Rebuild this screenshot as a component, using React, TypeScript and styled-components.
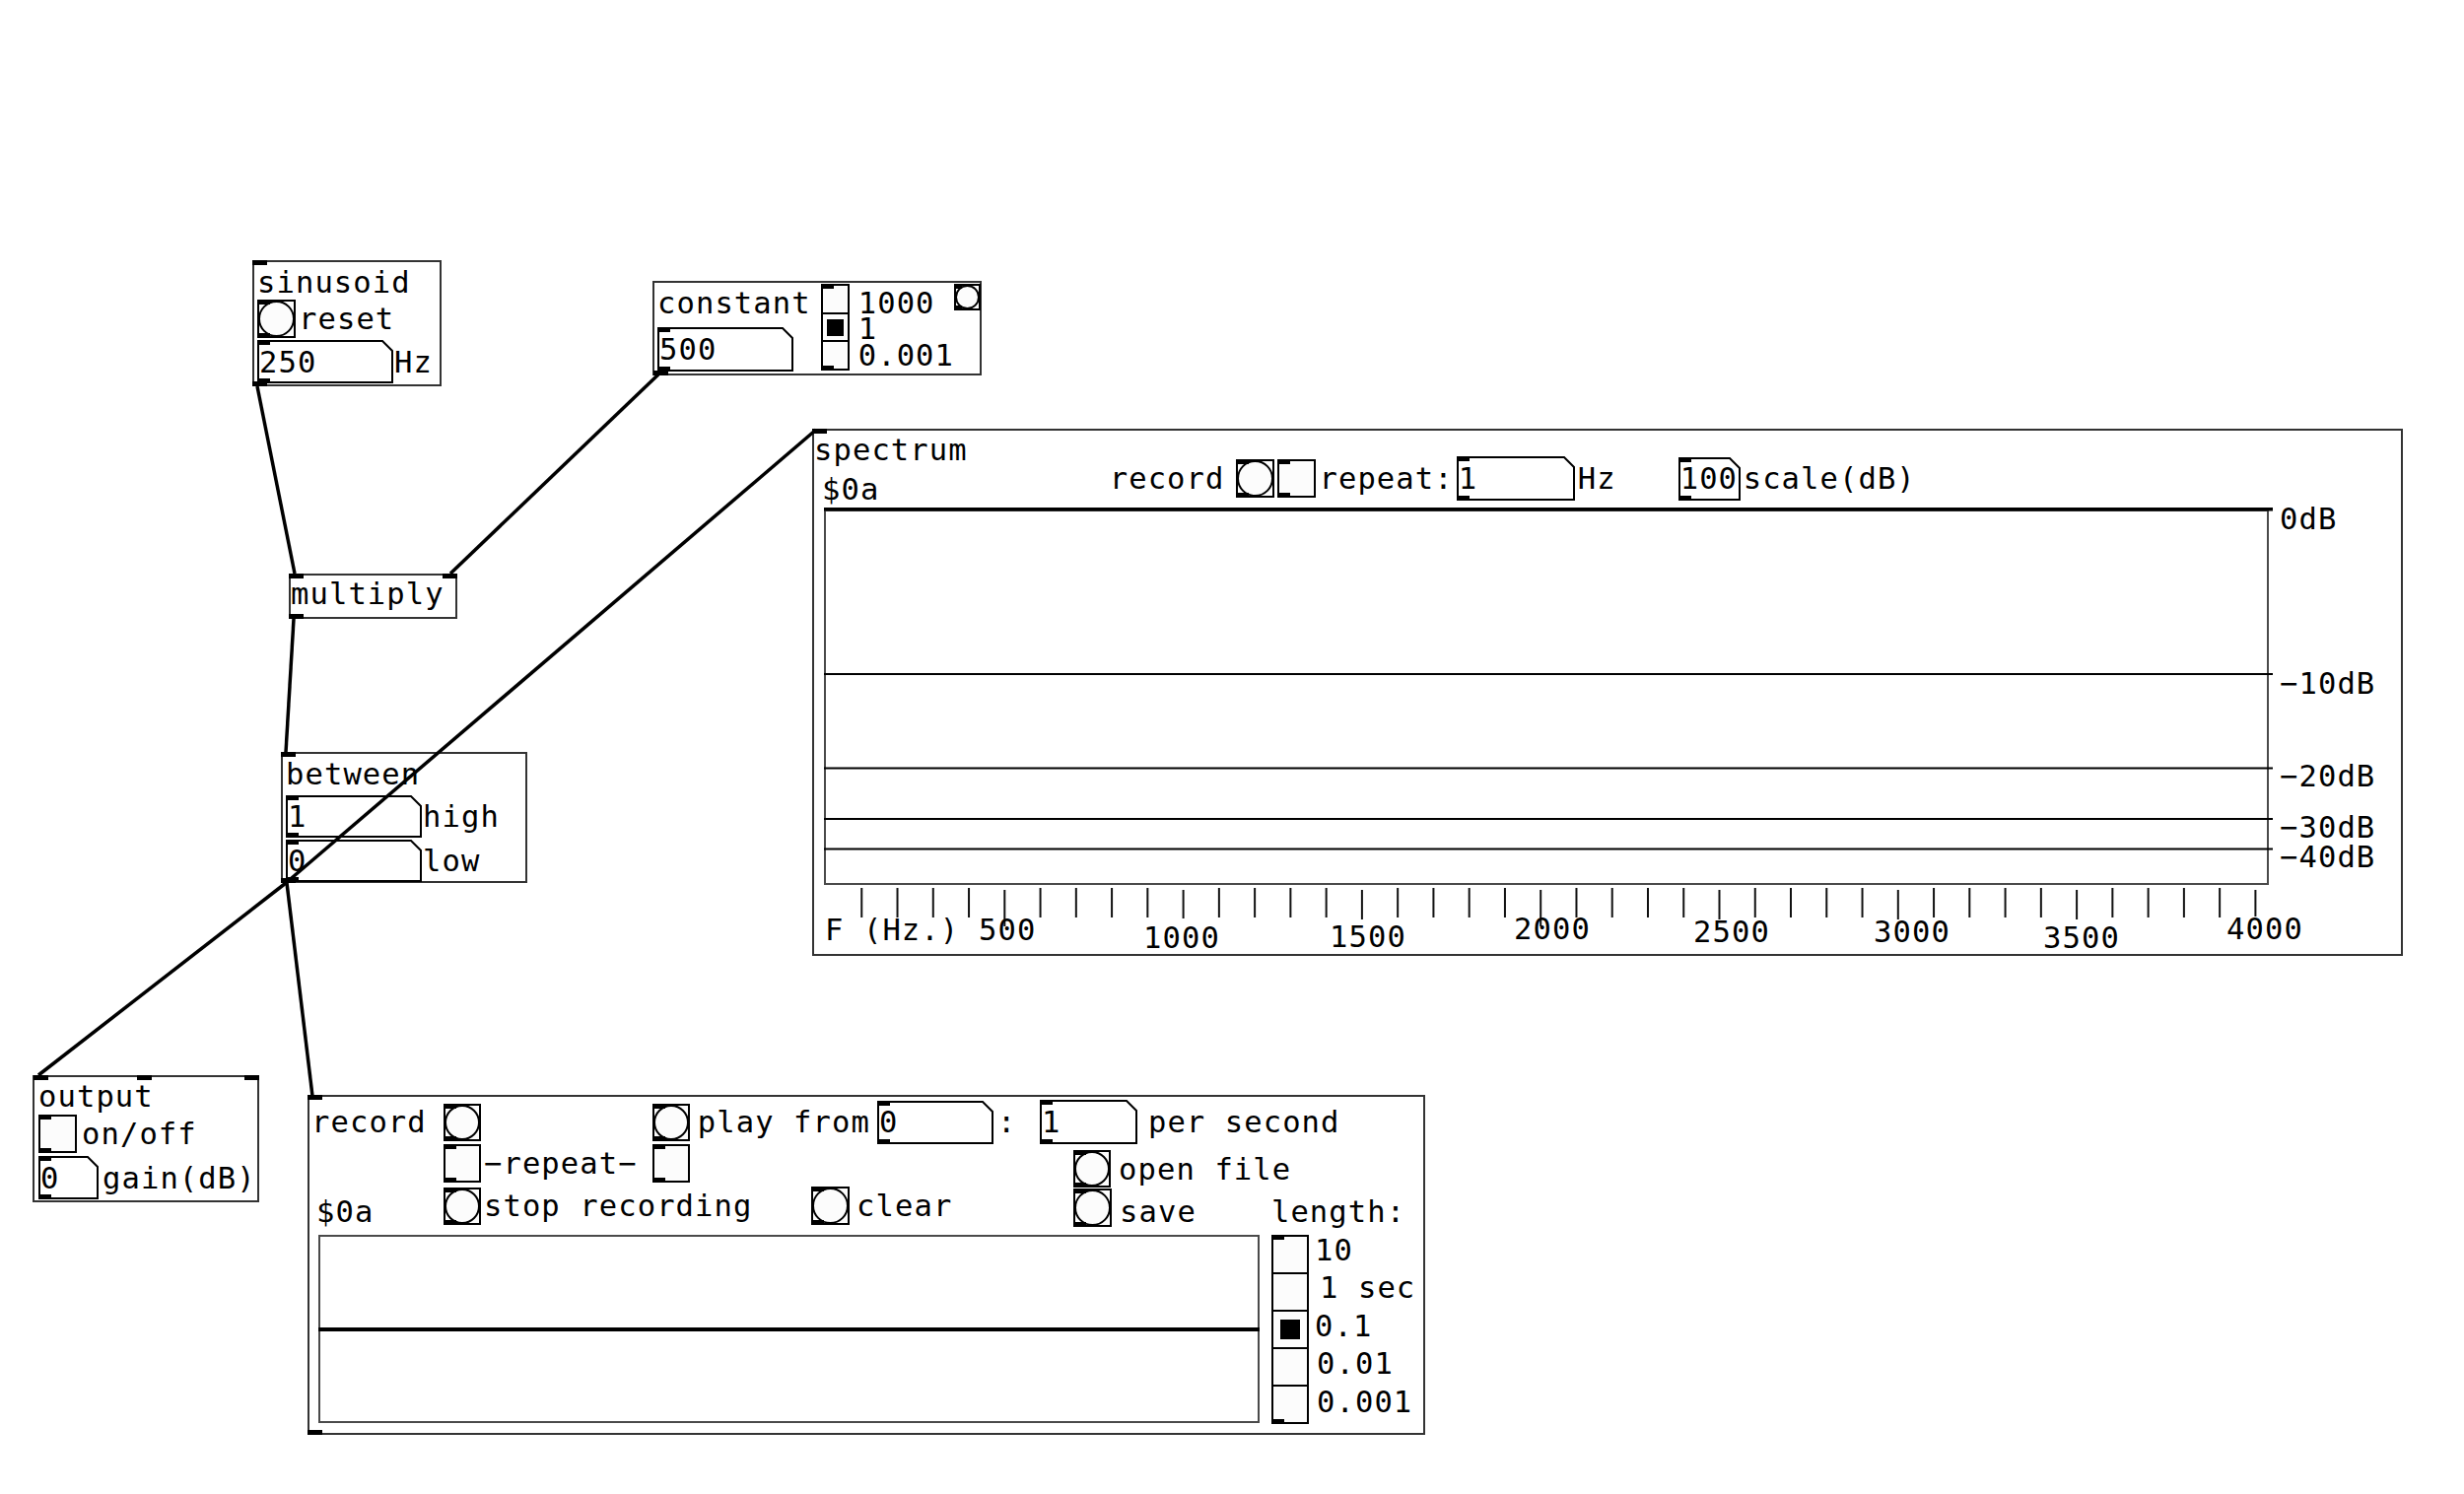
import React from "react";
import styled, { createGlobalStyle } from "styled-components";

const GlobalStyle = createGlobalStyle`
  html, body { margin: 0; padding: 0; background: #ffffff; }
  #root { width: 2500px; height: 1516px; }
`;

const FONT = `"DejaVu Sans Mono", "Liberation Mono", monospace`;

/* ---------- canvas & diagram nodes ---------- */

const Canvas = styled.div`
  position: relative;
  width: 2500px;
  height: 1516px;
  overflow: hidden;
  background: #ffffff;
  color: #000000;
  font-family: ${FONT};
  font-size: 30.5px;
  line-height: 31px;
  letter-spacing: 1.1px;
`;

type Rect = { $x: number; $y: number; $w: number; $h: number };

/* a Pd box: its place on the patch canvas is the content itself */
const Node = styled.div<Rect>`
  position: absolute;
  left: ${(p) => p.$x}px;
  top: ${(p) => p.$y}px;
  width: ${(p) => p.$w}px;
  height: ${(p) => p.$h}px;
  box-sizing: border-box;
  border: 2px solid #333333;
  background: #ffffff;
`;

/* inlet / outlet marks sit over the box border */
const Port = styled.span<{ $x: number; $out?: boolean }>`
  position: absolute;
  left: ${(p) => p.$x - 2}px;
  ${(p) => (p.$out ? "bottom" : "top")}: -2px;
  width: 15px;
  height: 5px;
  background: #000000;
`;

const Label = styled.span<{ $ml?: number }>`
  display: block;
  flex: none;
  margin-left: ${(p) => p.$ml ?? 0}px;
  white-space: pre;
`;

const WidgetRow = styled.div<{ $gap: number }>`
  display: flex;
  align-items: center;
  gap: ${(p) => p.$gap}px;
`;

/* ---------- iemgui widgets ---------- */

const IemShell = styled.div<{ $w: number; $h: number; $ml?: number }>`
  position: relative;
  flex: none;
  width: ${(p) => p.$w}px;
  height: ${(p) => p.$h}px;
  margin-left: ${(p) => p.$ml ?? 0}px;
  box-sizing: border-box;
  border: 2px solid #000000;
  background: #fcfcfc;
`;

const IemMark = styled.span<{ $out?: boolean; $small?: boolean }>`
  position: absolute;
  left: -2px;
  ${(p) => (p.$out ? "bottom" : "top")}: -2px;
  width: ${(p) => (p.$small ? 8 : 13)}px;
  height: 5px;
  background: #000000;
`;

const BangRing = styled.span`
  position: absolute;
  inset: -1px;
  box-sizing: border-box;
  border: 2px solid #000000;
  border-radius: 50%;
`;

const NumWrap = styled.div<{ $w: number; $h: number; $ml?: number }>`
  position: relative;
  flex: none;
  display: flex;
  align-items: center;
  width: ${(p) => p.$w}px;
  height: ${(p) => p.$h}px;
  margin-left: ${(p) => p.$ml ?? 0}px;
  padding-left: 2px;
  box-sizing: border-box;
`;

const NumFrame = styled.svg`
  position: absolute;
  inset: 0;
  overflow: visible;
`;

const NumMark = styled.span<{ $out?: boolean }>`
  position: absolute;
  left: 0;
  ${(p) => (p.$out ? "bottom" : "top")}: 0;
  width: 13px;
  height: 5px;
  background: #000000;
`;

const NumValue = styled.span`
  position: relative;
  white-space: pre;
`;

const RadioColumn = styled.div<{ $w: number; $h: number; $ml?: number }>`
  position: relative;
  flex: none;
  display: flex;
  flex-direction: column;
  width: ${(p) => p.$w}px;
  height: ${(p) => p.$h}px;
  margin-left: ${(p) => p.$ml ?? 0}px;
  box-sizing: border-box;
  border: 2px solid #000000;
  background: #fcfcfc;
`;

const RadioCell = styled.div`
  flex: 1 1 0;
  display: flex;
  align-items: center;
  justify-content: center;
  & + & {
    border-top: 2px solid #000000;
  }
`;

const RadioDot = styled.span<{ $d: number }>`
  width: ${(p) => p.$d}px;
  height: ${(p) => p.$d}px;
  background: #000000;
`;

const ScaleStack = styled.div<{ $lh: number; $gap?: number; $pt?: number; $mt?: number; $ml?: number }>`
  display: flex;
  flex-direction: column;
  flex: none;
  gap: ${(p) => p.$gap ?? 0}px;
  line-height: ${(p) => p.$lh}px;
  padding-top: ${(p) => p.$pt ?? 0}px;
  margin-top: ${(p) => p.$mt ?? 0}px;
  margin-left: ${(p) => p.$ml ?? 0}px;
`;

/* ---------- node layouts ---------- */

const SinusoidBox = styled(Node)`
  display: flex;
  flex-direction: column;
  gap: 2px;
  padding: 5px 0 0 3px;
`;

const ConstantBox = styled(Node)`
  display: flex;
  align-items: flex-start;
  padding: 1px 0 0 3px;
`;

const ConstantMain = styled.div`
  display: flex;
  flex-direction: column;
  gap: 9px;
  padding-top: 4px;
`;

const CornerBang = styled.div`
  margin-left: auto;
`;

const MultiplyBox = styled(Node)`
  padding-top: 3px;
`;

const BetweenBox = styled(Node)`
  display: grid;
  grid-template-rows: 40px 43px 43px;
  row-gap: 2px;
  align-items: center;
  padding-left: 3px;
`;

const OutputBox = styled(Node)`
  display: flex;
  flex-direction: column;
  gap: 3px;
  padding: 4px 0 0 4px;
`;

const SpectrumBox = styled(Node)`
  display: flex;
  flex-direction: column;
  padding-top: 2px;
`;

const SpectrumHeader = styled.div`
  display: flex;
  align-items: flex-start;
`;

const TitleStack = styled.div`
  display: flex;
  flex-direction: column;
  gap: 9px;
  padding-top: 2px;
`;

const HeaderControls = styled(WidgetRow)`
  margin: 24px 0 0 144px;
`;

const SpectrumChart = styled.svg`
  display: block;
  flex: none;
  margin: 1px 0 0 8px;
  overflow: visible;
  font-family: ${FONT};
  font-size: 30.5px;
  letter-spacing: 1.1px;
`;

const RecordBox = styled(Node)`
  display: flex;
  flex-direction: column;
  padding: 3px 0 0 2px;
`;

const RecordControls = styled.div`
  display: flex;
  align-items: flex-start;
`;

const BottomLabel = styled(Label)`
  align-self: flex-end;
`;

const ControlStack = styled.div<{ $gap: number; $ml: number; $mt?: number }>`
  display: flex;
  flex-direction: column;
  gap: ${(p) => p.$gap}px;
  margin-left: ${(p) => p.$ml}px;
  margin-top: ${(p) => p.$mt ?? 0}px;
`;

const SaveRow = styled(WidgetRow)`
  align-items: flex-end;
`;

const StorageRow = styled.div`
  display: flex;
  align-items: flex-start;
  margin-top: 8px;
`;

const ArrayView = styled.svg`
  display: block;
  flex: none;
  margin-left: 7px;
`;

const CordLayer = styled.svg`
  position: absolute;
  left: 0;
  top: 0;
  z-index: 5;
  pointer-events: none;
`;

/* ---------- widget components ---------- */

function Bang({ s, small, ml }: { s: number; small?: boolean; ml?: number }) {
  return (
    <IemShell $w={s} $h={s} $ml={ml}>
      <BangRing />
      <IemMark $small={small} />
      <IemMark $out $small={small} />
    </IemShell>
  );
}

function Toggle({ w, h, ml }: { w: number; h: number; ml?: number }) {
  return (
    <IemShell $w={w} $h={h} $ml={ml}>
      <IemMark />
      <IemMark $out />
    </IemShell>
  );
}

function NumBox({ w, h, value, ml }: { w: number; h: number; value: string; ml?: number }) {
  const pts = `1,1 ${w - 11},1 ${w - 1},11 ${w - 1},${h - 1} 1,${h - 1}`;
  return (
    <NumWrap $w={w} $h={h} $ml={ml}>
      <NumFrame width={w} height={h} viewBox={`0 0 ${w} ${h}`}>
        <polygon points={pts} fill="#ffffff" stroke="#000000" strokeWidth={2} />
      </NumFrame>
      <NumMark />
      <NumMark $out />
      <NumValue>{value}</NumValue>
    </NumWrap>
  );
}

function VRadio({ w, h, n, sel, dot, ml }: { w: number; h: number; n: number; sel: number; dot: number; ml?: number }) {
  return (
    <RadioColumn $w={w} $h={h} $ml={ml}>
      {Array.from({ length: n }, (_, i) => (
        <RadioCell key={i}>{i === sel ? <RadioDot $d={dot} /> : null}</RadioCell>
      ))}
      <IemMark />
      <IemMark $out />
    </RadioColumn>
  );
}

/* ---------- chart data (spectrum node coordinates) ---------- */

const dbLevels = [
  { y: 81.7, w: 3.5, label: "0dB", b: 102 },
  { y: 249, w: 2, label: "\u221210dB", b: 269 },
  { y: 344.5, w: 2, label: "\u221220dB", b: 363 },
  { y: 396, w: 2, label: "\u221230dB", b: 415 },
  { y: 426.5, w: 2, label: "\u221240dB", b: 445 },
];

const freqLabels = [
  { t: "F (Hz.)", x: 13, b: 519 },
  { t: "500", x: 169, b: 519 },
  { t: "1000", x: 336, b: 527 },
  { t: "1500", x: 525, b: 526 },
  { t: "2000", x: 712, b: 518 },
  { t: "2500", x: 894, b: 521 },
  { t: "3000", x: 1077, b: 521 },
  { t: "3500", x: 1249, b: 527 },
  { t: "4000", x: 1435, b: 518 },
];

const bigTickEnd: Record<number, number> = {
  5: 505, 10: 497, 15: 498, 20: 505, 25: 498, 30: 498, 35: 498, 40: 495,
};

const ticks = Array.from({ length: 40 }, (_, k) => {
  const i = k + 1;
  const big = i % 5 === 0;
  return { x: 14 + i * 36.26, y1: big ? 468 : 466, y2: big ? bigTickEnd[i] : 496 };
});

const cords = [
  [261, 392, 299, 582],
  [668, 380, 457, 582],
  [298, 628, 290, 763],
  [290, 896, 828, 436],
  [290, 896, 39, 1091],
  [291, 896, 317, 1112],
];

const lengthLabels = [
  { t: "10", ml: 0 },
  { t: "1 sec", ml: 5 },
  { t: "0.1", ml: 0 },
  { t: "0.01", ml: 2 },
  { t: "0.001", ml: 2 },
];

/* ---------- page ---------- */

export default function App() {
  return (
    <>
      <GlobalStyle />
      <Canvas>
        <SinusoidBox $x={256} $y={264} $w={192} $h={128}>
          <Port $x={0} />
          <Label>sinusoid</Label>
          <WidgetRow $gap={3}>
            <Bang s={39} />
            <Label>reset</Label>
          </WidgetRow>
          <WidgetRow $gap={1}>
            <NumBox w={138} h={44} value="250" />
            <Label>Hz</Label>
          </WidgetRow>
          <Port $x={0} $out />
        </SinusoidBox>

        <ConstantBox $x={662} $y={285} $w={334} $h={96}>
          <ConstantMain>
            <Label>constant</Label>
            <NumBox w={138} h={45} value="500" />
          </ConstantMain>
          <VRadio w={29} h={88} n={3} sel={1} dot={17} ml={10} />
          <ScaleStack $lh={24} $gap={2.5} $pt={7.5} $ml={9}>
            <Label>1000</Label>
            <Label>1</Label>
            <Label>0.001</Label>
          </ScaleStack>
          <CornerBang>
            <Bang s={27} small />
          </CornerBang>
          <Port $x={1} $out />
        </ConstantBox>

        <MultiplyBox $x={293} $y={582} $w={171} $h={46}>
          <Port $x={0} />
          <Port $x={156} />
          <Label>multiply</Label>
          <Port $x={0} $out />
        </MultiplyBox>

        <BetweenBox $x={285} $y={763} $w={250} $h={133}>
          <Port $x={0} />
          <Label>between</Label>
          <WidgetRow $gap={1}>
            <NumBox w={138} h={43} value="1" />
            <Label>high</Label>
          </WidgetRow>
          <WidgetRow $gap={1}>
            <NumBox w={138} h={43} value="0" />
            <Label>low</Label>
          </WidgetRow>
          <Port $x={0} $out />
        </BetweenBox>

        <OutputBox $x={33} $y={1091} $w={230} $h={129}>
          <Port $x={1} />
          <Port $x={106} />
          <Port $x={215} />
          <Label>output</Label>
          <WidgetRow $gap={5}>
            <Toggle w={39} h={39} />
            <Label>on/off</Label>
          </WidgetRow>
          <WidgetRow $gap={4}>
            <NumBox w={61} h={44} value="0" />
            <Label>gain(dB)</Label>
          </WidgetRow>
        </OutputBox>

        <SpectrumBox $x={824} $y={435} $w={1614} $h={535}>
          <Port $x={0} />
          <SpectrumHeader>
            <TitleStack>
              <Label>spectrum</Label>
              <Label $ml={8}>$0a</Label>
            </TitleStack>
            <HeaderControls $gap={3}>
              <Label>record</Label>
              <Bang s={39} ml={9} />
              <Toggle w={39} h={39} />
              <Label>repeat:</Label>
              <NumBox w={120} h={45} value="1" />
              <Label>Hz</Label>
              <NumBox w={63} h={44} value="100" ml={60} />
              <Label>scale(dB)</Label>
            </HeaderControls>
          </SpectrumHeader>
          <SpectrumChart width={1600} height={460} viewBox="10 78 1600 460">
            <rect x={13} y={83} width={1464} height={379} fill="#ffffff" stroke="#4a4a4a" strokeWidth={2} />
            {dbLevels.map((l) => (
              <line key={l.label} x1={12} x2={1482} y1={l.y} y2={l.y} stroke="#000000" strokeWidth={l.w} />
            ))}
            {dbLevels.map((l) => (
              <text key={l.label} x={1489} y={l.b} fill="#000000">
                {l.label}
              </text>
            ))}
            {ticks.map((t, i) => (
              <line key={i} x1={t.x} x2={t.x} y1={t.y1} y2={t.y2} stroke="#111111" strokeWidth={2} />
            ))}
            {freqLabels.map((f) => (
              <text key={f.t} x={f.x} y={f.b} fill="#000000" xmlSpace="preserve">
                {f.t}
              </text>
            ))}
          </SpectrumChart>
        </SpectrumBox>

        <RecordBox $x={312} $y={1111} $w={1134} $h={345}>
          <Port $x={0} />
          <WidgetRow $gap={4}>
            <Label>record</Label>
            <Bang s={38} ml={13} />
            <Bang s={38} ml={170} />
            <Label $ml={4}>play from</Label>
            <NumBox w={118} h={44} value="0" ml={3} />
            <Label>:</Label>
            <NumBox w={99} h={45} value="1" ml={19.5} />
            <Label $ml={7}>per second</Label>
          </WidgetRow>

          <RecordControls>
            <BottomLabel $ml={5}>$0a</BottomLabel>
            <ControlStack $gap={4} $ml={70.6}>
              <WidgetRow $gap={3}>
                <Toggle w={38} h={39} />
                <Label>{"\u2212repeat\u2212"}</Label>
                <Toggle w={38} h={39} ml={12} />
              </WidgetRow>
              <WidgetRow $gap={3}>
                <Bang s={38} />
                <Label>stop recording</Label>
                <Bang s={39} ml={56.6} />
                <Label $ml={4}>clear</Label>
              </WidgetRow>
            </ControlStack>
            <ControlStack $gap={1} $ml={122.7} $mt={6}>
              <WidgetRow $gap={8}>
                <Bang s={38} />
                <Label>open file</Label>
              </WidgetRow>
              <SaveRow $gap={8}>
                <Bang s={39} />
                <Label>save</Label>
                <Label $ml={68}>length:</Label>
              </SaveRow>
            </ControlStack>
          </RecordControls>

          <StorageRow>
            <ArrayView width={955} height={191} viewBox="0 0 955 191">
              <rect x={1} y={1} width={953} height={189} fill="#ffffff" stroke="#4a4a4a" strokeWidth={2} />
              <line x1={0} x2={955} y1={96} y2={96} stroke="#000000" strokeWidth={4} />
            </ArrayView>
            <VRadio w={38} h={192} n={5} sel={2} dot={20} ml={12} />
            <ScaleStack $lh={38.4} $mt={-3} $ml={6}>
              {lengthLabels.map((l) => (
                <Label key={l.t} $ml={l.ml}>
                  {l.t}
                </Label>
              ))}
            </ScaleStack>
          </StorageRow>
          <Port $x={0} $out />
        </RecordBox>

        <CordLayer width={2500} height={1516} viewBox="0 0 2500 1516">
          {cords.map(([x1, y1, x2, y2], i) => (
            <line key={i} x1={x1} y1={y1} x2={x2} y2={y2} stroke="#000000" strokeWidth={3.5} />
          ))}
        </CordLayer>
      </Canvas>
    </>
  );
}
